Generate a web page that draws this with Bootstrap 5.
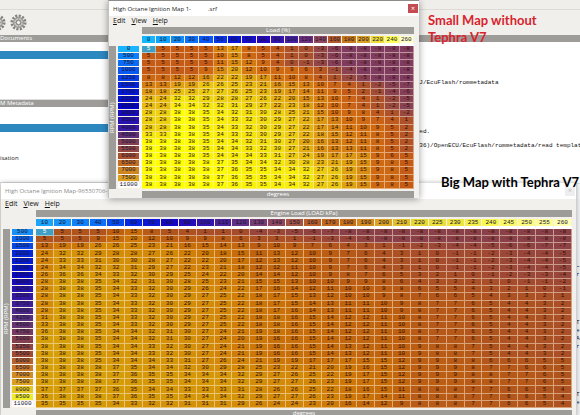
<!DOCTYPE html>
<html lang="en">
<head>
<meta charset="utf-8">
<meta name="viewport" content="width=device-width, initial-scale=1">
<title>Ignition maps</title>
<link href="https://cdn.jsdelivr.net/npm/bootstrap@5.3.0/dist/css/bootstrap.min.css" rel="stylesheet">
<style>
  html, body { height: 100%; }
  body { font: 6px/8px "Open Sans", "Noto Sans", sans-serif; background: #eeebe6; color: #222; }
  .desk { height: 100vh; }
  .strip { height: 10px; background: #f0eeea; border-bottom: 1px solid #dedbd6; }
  .tools { height: 25px; background: #f1efec; padding-left: 10px; }
  .tools svg { width: 17px; height: 17px; display: block; }
  .gear-cut { margin-left: -21px; margin-right: 4px; }
  .side { width: 35%; }
  .bar { height: 7px; line-height: 7px; background: #9d9c98; color: #fff; white-space: nowrap; }
  .pane { background: #fff; border-bottom: 1px solid #ddd; }
  .pane-a { height: 58px; padding-top: 9px; }
  .pane-b { height: 76px; padding-top: 17px; }
  .item { padding-top: 22px; }
  .picked { height: 8px; background: #2e88c0; }
  .log { font: 6px/7px "Liberation Mono", monospace; white-space: pre; color: #111; padding: 37px 0 0 217px; height: 142px; }
  .log-low { height: 16px; background: #fcfcfc; }
  .edge { position: absolute; right: 0; top: 199px; bottom: 0; width: 4px; background: #f8f8f7; font: 6px/8px "Liberation Mono", monospace; white-space: pre; padding-top: 64px; }

  .win { position: absolute; background: #f2f0ed; box-shadow: 0 1px 7px rgba(0,0,0,.4); }
  .win-small { left: 108px; top: 0; width: 311px; border-top: 1px solid #8e8c88; border-left: 1px solid #c4c2be; }
  .win-big { left: 1px; right: 3px; top: 183px; box-shadow: 0 0 5px rgba(0,0,0,.3); border-right: 1px solid #ccd0d8; }
  .titlebar { height: 15px; background: #fff; padding-left: 4px; font-size: 6px; }
  .titlebar .gap-name { width: 17px; }
  .win-big .titlebar { height: 16px; color: #8a8a8a; }
  .closer { border: 0; width: 10px; height: 9px; line-height: 8px; padding: 0; font-size: 7px; background: #c34c51; color: #fff; margin-right: 1px; }
  .win-big .closer { background: #eeeeef; color: #bbb; }
  .menus { height: 10px; line-height: 10px; padding-left: 4px; gap: 6px; font-size: 7px; }
  .menus a { color: #111; text-decoration: none; }
  .menus a::first-letter { text-decoration: underline; }

  .plot { display: grid; grid-template-columns: 7px 1fr; column-gap: 2px; row-gap: 2px; padding: 1px 5px 0 0; }
  .win-big .plot { padding: 1px 4px 0 2px; }
  .over { margin-left: 24px; }
  .upright { writing-mode: vertical-rl; transform: rotate(180deg); width: 7px; line-height: 7px; background: #9d9c98; color: #fff; }
  .upright-box { padding-top: 10px; }
  .plot .bar { grid-column: 2; }
  .upright-box { grid-column: 1; }
  .grid { table-layout: fixed; width: 100%; border-collapse: separate; border-spacing: 0; font: 6px/6px "Liberation Mono", monospace; text-align: center; }
  .win-small .grid { height: 153px; }
  .win-big .grid { height: 189px; }
  .grid th, .grid td { padding: 0; font-weight: 400; border: solid rgba(255,240,215,.5); border-width: 0 1px 1px 0; overflow: hidden; color: #301000; white-space: nowrap; vertical-align: middle; }
  .grid thead th { height: 10px; border-bottom: 3px solid #fff; background-clip: padding-box; color: #181430; }
  .grid tbody th { border-right: 3px solid #f8f7f5; background-clip: padding-box; color: #181430; }
  .grid .first { width: 24px; border-right: 3px solid #f2f0ed; border-bottom-color: #f2f0ed; }
  .grid .cursor { background: #3f9fc4 !important; color: #fff; }

  .note { position: absolute; font: 700 13px/17px Lato, sans-serif; white-space: nowrap; }
  .note-red { left: 428px; top: 12px; color: #d8232e; }
  .note-black { right: 1px; top: 174px; color: #000; }
</style>
<script src="https://cdn.jsdelivr.net/npm/bootstrap@5.3.0/dist/js/bootstrap.bundle.min.js"></script>
</head>
<body>
<main class="desk position-relative overflow-hidden">
  <svg width="0" height="0" class="position-absolute" aria-hidden="true">
    <symbol id="gear" viewBox="-9 -9 18 18">
      <circle r="7" fill="none" stroke="#84827e" stroke-width="3" stroke-dasharray="2.2 1.465"/>
      <circle r="5.2" fill="#c6c4c0" stroke="#85837f"/>
      <path d="M0-4.500V4.500M-4.500 0H4.500M-3.200-3.200 3.200 3.200M3.200-3.200-3.200 3.200" stroke="#9f9d99" stroke-width=".8"/>
      <circle r="2.300" fill="#f1efec" stroke="#7b7975"/>
    </symbol>
  </svg>

  <div class="strip"></div>
  <div class="tools d-flex align-items-center">
    <button class="btn p-0 border-0 gear-cut" aria-label="Options"><svg><use href="#gear"/></svg></button>
    <button class="btn p-0 border-0" aria-label="Settings"><svg><use href="#gear"/></svg></button>
  </div>
  <div class="d-flex">
    <aside class="side">
      <div class="bar">Documents</div>
      <div class="pane pane-a"><div class="picked"></div></div>
      <div class="bar">M Metadata</div>
      <div class="pane pane-b"><div class="picked"></div><div class="item">isation</div></div>
    </aside>
    <section class="flex-fill overflow-hidden">
      <div class="bar"></div>
      <div class="pane log">J/EcuFlash/rommetadata






ed.

36)/OpenECU/EcuFlash/rommetadata/read templat</div>
      <div class="log-low"></div>
    </section>
  </div>
  <div class="edge">~
r





T
e
A
r





T
e</div>

  <section class="win win-big">
    <div class="titlebar d-flex align-items-center"><span>High Octane Ignition Map-96530706-1</span><button class="closer ms-auto" aria-label="Close">×</button></div>
    <nav class="menus d-flex"><a class="d-block" href="#">Edit</a><a class="d-block" href="#">View</a><a class="d-block" href="#">Help</a></nav>
    <div class="plot">
      <div class="bar over text-center">Engine Load (LOAD kPa)</div>
      <div class="upright-box d-flex"><div class="upright text-center">RPM (RPM)</div></div>
      <table class="grid" id="big"></table>
      <div class="bar over text-center">degrees</div>
    </div>
  </section>

  <section class="win win-small">
    <div class="titlebar d-flex align-items-center"><span>High Octane Ignition Map 1-</span><span class="gap-name"></span><span>.srf</span><button class="closer ms-auto" aria-label="Close">×</button></div>
    <nav class="menus d-flex"><a class="d-block" href="#">Edit</a><a class="d-block" href="#">View</a><a class="d-block" href="#">Help</a></nav>
    <div class="plot">
      <div class="bar over text-center">Load (%)</div>
      <div class="upright-box d-flex"><div class="upright text-center">RPM (RPM)</div></div>
      <table class="grid" id="small"></table>
      <div class="bar over text-center">degrees</div>
    </div>
  </section>

  <div class="note note-red">Small Map without<br>Tephra V7</div>
  <div class="note note-black">Big Map with Tephra V7</div>
</main>

<script>
  const low = '-8 -8 -8 -8 -8';
  const small = {
    cols: '0 10 20 30 40 50 60 70 80 90 100 120 140 160 180 200 220 240 260',
    rows: '0 500 750 1000 1250 1500 1750 2000 2500 3000 3500 4000 4500 5000 5500 6000 6500 7000 7500 11000',
    data: [
      '5 5 5 5 5 13 17 8 5 4 1 0 -3 -6 ' + low,
      '5 5 5 5 5 10 15 8 5 4 1 0 -3 -6 ' + low,
      '5 5 5 5 5 11 15 12 9 4 0 -1 -3 -6 ' + low,
      '5 5 5 5 9 15 20 12 10 9 9 6 3 -1 -4 -8 -8 -8 -8',
      '8 8 12 12 16 22 22 19 17 11 10 8 4 1 -2 -5 -8 -8 -8',
      '13 13 19 19 26 26 25 23 21 16 15 13 10 7 4 1 -2 -5 -7',
      '18 18 25 25 27 27 26 25 23 19 17 14 11 9 5 2 -1 -4 -6',
      '24 24 32 32 29 28 28 27 26 22 20 15 13 10 7 4 1 -2 -5',
      '24 24 34 34 32 32 31 29 27 22 23 18 12 10 7 4 1 -2 -5',
      '28 28 38 38 35 34 32 31 30 28 25 21 15 10 9 8 4 1 -2',
      '28 28 38 38 35 34 33 32 30 29 27 22 17 13 10 9 7 4 1',
      '28 28 38 38 35 34 33 32 30 29 27 22 17 14 11 10 9 5 2',
      '33 33 38 38 35 34 33 32 30 29 27 22 18 15 12 11 8 5 2',
      '38 38 38 38 35 34 34 32 31 30 27 20 16 13 12 11 8 5 2',
      '38 38 38 38 35 34 34 33 32 30 27 21 16 13 13 11 8 5 2',
      '38 38 38 38 35 34 34 34 33 31 27 24 19 17 17 15 9 6 5',
      '38 38 38 38 38 37 35 34 34 32 30 28 23 21 19 15 9 8 5',
      '38 38 38 38 38 37 36 35 35 34 34 32 27 26 19 15 9 8 5',
      '38 38 38 38 38 37 36 35 35 34 34 32 27 26 19 15 9 8 5',
      '38 38 38 38 38 37 36 35 35 34 34 32 27 26 19 15 9 8 5'
    ],
    colStops: [[0,'12b8ff'],[2,'108cf4'],[4,'0858ff'],[6,'0414d8'],[8,'2408c0'],[10,'4420a4'],[11,'703080'],[12,'904860'],[13,'b45a28'],[14,'c87818'],[15,'dca020'],[16,'ecdc38'],[17,'ffff58'],[18,'ffffc8']],
    rowStops: [[0,'18b4ff'],[1,'0c80f8'],[3,'0858f4'],[5,'0424e0'],[8,'0404c8'],[11,'3818a4'],[12,'603078'],[13,'804058'],[15,'a85030'],[16,'c46c20'],[18,'dca020'],[19,'ffffff']],
    heat: [[-8,'803c60'],[-4,'8c4250'],[0,'a85030'],[5,'c45c18'],[10,'d26e10'],[17,'dc9812'],[24,'e8bc10'],[30,'f0dc10'],[38,'ffff00']]
  };
  const tail = ' 15 14 12 12 11 10 8 7 7 6 5 4 4 3 2';
  const tail2 = ' 15 14 13 12 11 10 9 8 8 7 5 4 4 3 2';
  const eight = ' ' + low + ' ' + low;
  const big = {
    cols: '10 20 30 40 50 60 70 80 90 100 110 120 130 140 150 160 170 180 190 200 210 220 225 230 235 240 245 250 255 260',
    rows: '500 1000 1500 2000 2250 2500 2750 3000 3250 3500 3750 4000 4250 4500 4750 5000 5250 5500 6000 6500 7000 7500 8000 8500 11000',
    data: [
      '5 5 5 5 10 15 8 5 4 1 1 0 -4 -3 -5 -6 -7 -8 -8 -8' + eight,
      '5 5 5 9 15 20 12 10 9 9 8 6 3 3 1 -1 -3 -4 -6 -8' + eight,
      '13 19 19 26 26 25 23 21 16 15 14 13 9 10 9 7 6 4 3 1 -1 -2 -3 -4 -4 -5 -6 -6 -7 -7',
      '24 32 32 29 28 28 27 26 22 20 18 15 11 13 12 10 9 7 6 4 3 1 0 -1 -1 -2 -3 -4 -4 -5',
      '24 33 33 31 30 30 28 27 22 22 20 17 12 13 12 10 9 7 6 4 3 1 0 -1 -1 -2 -3 -4 -4 -5',
      '24 34 34 32 32 31 29 27 22 23 21 18 12 12 11 10 9 7 6 4 3 1 0 -1 -1 -2 -3 -4 -4 -5',
      '26 36 36 34 33 32 30 29 25 24 22 20 14 14 12 10 9 8 7 6 5 3 2 1 0 -1 -2 -3 -3 -4',
      '28 38 38 35 34 32 31 30 28 25 23 21 15 15 13 10 10 9 9 8 6 4 3 3 2 1 0 -1 -1 -2',
      '28 38 38 35 34 33 32 30 29 26 24 22 17 16 14 12 11 10 10 9 8 6 5 5 4 3 2 1 0 -1',
      '28 38 38 35 34 33 32 30 29 27 25 22 18 17 15 13 12 10 10 9 8 7 6 6 5 4 3 3 2 1',
      '28 38 38 35 34 33 32 30 29 27 25 22 18 17 15 14 13 11 11 10 9 8 7 7 6 5 4 4 3 2',
      '28 38 38 35 34 33 32 30 29 27 25 22 18 17 16 14 13 11 11 10 9 8 7 7 6 5 4 4 3 2',
      '31 38 38 35 34 33 32 30 29 27 25 22 18 18 16' + tail,
      '33 38 38 35 34 33 32 30 29 27 25 22 18 18 16' + tail,
      '36 38 38 35 34 34 32 31 30 27 24 21 19 18 16' + tail,
      '38 38 38 35 34 34 32 31 30 27 24 20 19 16 16' + tail,
      '38 38 38 35 34 34 33 32 30 27 24 21 19 16 16' + tail2,
      '38 38 38 35 34 34 33 32 30 27 24 21 19 16 16' + tail2,
      '38 38 38 35 34 34 34 33 31 27 26 24 21 19 19 17 17 17 15 15 12 9 9 8 8 6 6 6 5 5',
      '38 38 38 38 37 35 34 34 32 30 29 28 25 23 22 21 20 19 16 15 12 9 9 9 8 7 7 6 6 5',
      '38 38 38 38 37 36 35 35 34 34 34 32 29 27 26 25 22 19 17 15 12 9 9 9 8 8 7 7 6 5',
      '38 38 38 38 37 36 35 35 34 34 34 32 29 27 27 26 23 19 17 15 12 9 9 9 8 8 7 7 6 5',
      '37 37 37 37 36 35 34 34 33 33 33 31 28 26 26 25 22 18 16 15 11 8 8 8 7 7 6 6 5 4',
      '36 38 38 38 37 36 35 35 34 34 34 32 29 27 27 26 23 19 17 14 11 8 8 8 7 7 6 6 5 4',
      '35 35 35 35 34 33 32 32 31 31 31 29 26 24 24 23 20 16 14 12 9 8 8 8 7 7 6 6 5 4'
    ],
    colStops: [[0,'1ca4fa'],[3,'0c70f8'],[5,'0428e4'],[7,'1408c4'],[9,'3414b0'],[11,'603088'],[13,'904860'],[15,'b85e28'],[17,'c87018'],[19,'dca424'],[21,'e6d834'],[25,'f8f850'],[29,'ffffb0']],
    rowStops: [[0,'1890f8'],[1,'0c68f8'],[3,'0428dc'],[6,'0808c4'],[9,'3418a4'],[12,'583080'],[15,'844050'],[17,'a04c34'],[19,'c87828'],[21,'dca020'],[22,'e6c824'],[23,'ecec28'],[24,'ffffff']],
    heat: [[-8,'8a4048'],[-4,'98463c'],[0,'a64c2c'],[5,'b0541e'],[10,'be6010'],[17,'ca7208'],[24,'d28408'],[38,'d69e08']]
  };
  const hex = (h, i) => parseInt(h.substr(i * 2, 2), 16);
  function tint(stops, v) {
    let i = 1;
    while (i < stops.length - 1 && v > stops[i][0]) i++;
    const [a, ca] = stops[i - 1], [b, cb] = stops[i];
    const t = (v - a) / (b - a);
    return 'rgb(' + [0, 1, 2].map(k => Math.round(hex(ca, k) + (hex(cb, k) - hex(ca, k)) * t)).join() + ')';
  }
  function draw(id, map) {
    const head = map.cols.split(' ').map((c, i) => `<th scope="col" style="background-color:${tint(map.colStops, i)}">${c}</th>`).join('');
    const body = map.rows.split(' ').map((r, y) =>
      `<tr><th scope="row" style="background-color:${tint(map.rowStops, y)}">${r}</th>` +
      map.data[y].split(' ').map((v, x) => `<td${x + y ? '' : ' class="cursor"'} style="background-color:${tint(map.heat, +v)}">${v}</td>`).join('') + '</tr>').join('');
    document.getElementById(id).innerHTML = `<thead><tr><td class="first"></td>${head}</tr></thead><tbody>${body}</tbody>`;
  }
  draw('small', small);
  draw('big', big);
</script>
</body>
</html>
